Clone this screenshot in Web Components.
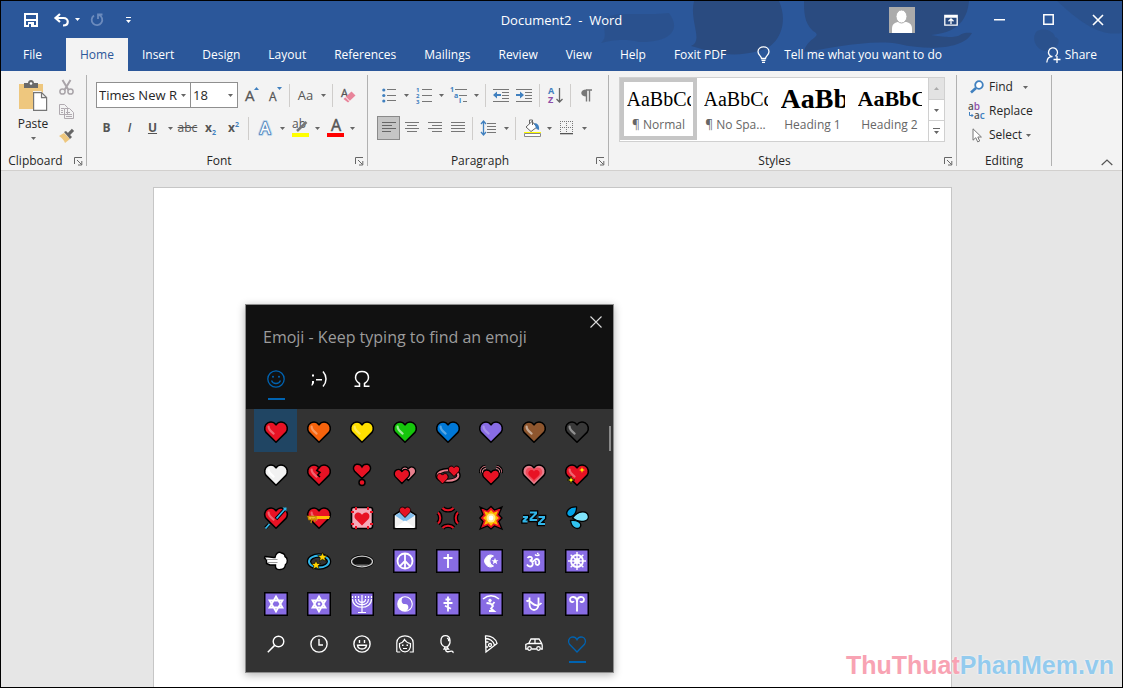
<!DOCTYPE html>
<html lang="en">
<head>
<meta charset="utf-8">
<title>Document2 - Word</title>
<style>
	body {
		margin: 0;
		font: 12px/16px "Open Sans", "Noto Sans", sans-serif;
		color: #262626;
	}
</style>
</head>
<body>
<word-window></word-window>

<script>
const heart = "M12 22.2L2 12.4C-.4 9.2 .6 4.6 3.8 2.9C6.6 1.4 10 2.2 12 4.8C14 2.2 17.4 1.4 20.2 2.9C23.4 4.6 24.4 9.2 22 12.4Z";
const smallHeart = "M6 11.5L1 6.4C-.2 4.6 .3 2.2 2 1.4C3.5 .7 5.1 1.2 6 2.6C6.9 1.2 8.5 .7 10 1.4C11.7 2.2 12.2 4.6 11 6.4Z";
const spark = "M0-4L1-1L4 0L1 1L0 4L-1 1L-4 0L-1-1Z";

const heartOf = (color, shine = .35) => `
	<path d="${heart}" fill="${color}" stroke="#000" stroke-width="1.6" stroke-linejoin="round"/>
	<path d="M4.6 6.5C4.3 9.4 7 11.6 9.6 13.6" fill="none" stroke="#fff" stroke-opacity="${shine}" stroke-width="2.2" stroke-linecap="round"/>`;

const tile = (art) => `
	<rect x="0" y="0" width="24" height="24" fill="#000"/>
	<rect x="1.5" y="1.5" width="21" height="21" fill="#886ce4"/>
	<g fill="none" stroke="#fff" stroke-width="1.8">${art}</g>`;

const outlined = (d, color, inner, outer) => `
	<path d="${d}" fill="none" stroke="#000" stroke-width="${outer}"/>
	<path d="${d}" fill="none" stroke="${color}" stroke-width="${inner}"/>`;

const spokes = (count, from, to) => Array.from({ length: count }, (_, i) =>
	`<path d="M12 ${12 - from}V${12 - to}" transform="rotate(${i * 360 / count} 12 12)"/>`).join("");

const lines = (rows) => rows.map(([x, y, w]) => `<path d="M${x} ${y}.5h${w}"/>`).join("");

// name: [width, height, svg content]
const ICONS = {
	save: [14, 14, `<path d="M1 1h12v12H1z" fill="none" stroke="#fff" stroke-width="2"/><path d="M2 6h10v2H2zM4 9h6v4H4z" fill="#fff"/><path d="M5 11h2v3H5z" fill="#2b579a"/>`],
	undo: [15, 14, `<path d="M6 1L1.5 5L6 9M2 5h7.5C15 5 15.500 12.500 9 12.500" fill="none" stroke="#fff" stroke-width="2.2"/>`],
	redo: [14, 14, `<path d="M9 2A5.300 5.300 0 1 1 4 2.500M8 6V1.500H12.500" fill="none" stroke="#6c8bbd" stroke-width="1.8"/>`],
	customize: [5, 6, `<path d="M0 0h5v1H0zM0 3h5L2.500 6z" fill="#fff"/>`],
	caret: [5, 3, `<path d="M0 0h5L2.500 3z" fill="currentColor"/>`],
	caretUp: [5, 3, `<path d="M0 3h5L2.500 0z" fill="currentColor"/>`],
	more: [7, 6, `<path d="M0 0h7v1H0zM1 3h5L3.500 6z" fill="#666"/>`],
	avatar: [26, 26, `<path d="M0 0h26v26H0z" fill="#ababab"/><path d="M3 26v-4c0-5 3-7 7-7h6c4 0 7 2 7 7v4z" fill="#fff"/><ellipse cx="12.500" cy="9.500" rx="5.500" ry="6.500" fill="#fff" stroke="#ababab"/>`],
	ribbonDisplay: [14, 12, `<path d="M.8 1.500h12.400v9.700H.8zM1 3h12M7 10V5M4.500 7.200L7 4.800L9.500 7.200" fill="none" stroke="#fff" stroke-width="1.300"/>`],
	minimize: [11, 11, `<path d="M0 5h11v1.500H0z" fill="#fff"/>`],
	maximize: [11, 11, `<path d="M.8.8h9.400v9.400H.8z" fill="none" stroke="#fff" stroke-width="1.5"/>`],
	close: [12, 12, `<path d="M1 1l10 10M11 1L1 11" stroke="#fff" stroke-width="1.6"/>`],
	thinClose: [12, 12, `<path d="M.5.5l11 11M11.500.5l-11 11" stroke="#ddd" stroke-width="1.1"/>`],
	bulb: [13, 17, `<path d="M4.500 12.500C4.500 10 1 9 1 5.700C1 2.700 3.500 .8 6.500 .8S12 2.700 12 5.700C12 9 8.500 10 8.500 12.500zM4.500 14.300h4M5 16.300h3" fill="none" stroke="#fff" stroke-width="1.3"/>`],
	share: [15, 16, `<path d="M.8 15.500C1 11.500 3 9.500 6.500 9.500M6.500 9.800A4.500 4.500 0 1 1 9.300 9.200M11 9v7M7.500 12.500h7" fill="none" stroke="#fff" stroke-width="1.3"/>`],
	paste: [28, 31, `<path d="M0 4h24v25H0z" fill="#eec77e"/><path d="M5 3h4c0-4 6-4 6 0h4v5H5z" fill="#6a6a6a"/><circle cx="12" cy="3.500" r="1.300" fill="#fff"/><path d="M14 11h8l6 6v14H14z" fill="#f3f3f3"/><path d="M14.600 12.600h8l5 5v12.800h-13zM22.500 12.600v5h5" fill="#fff" stroke="#767676" stroke-width="1.2"/>`],
	cut: [15, 15, `<g fill="none" stroke="#a9a4a9" stroke-width="1.5"><path d="M3.500 0L9.500 10M11.500 0L5.500 10" stroke-width="2"/><circle cx="3.500" cy="11.500" r="2.600"/><circle cx="11.500" cy="11.500" r="2.600"/></g>`],
	copy: [15, 15, `<g fill="#f3f3f3" stroke="#b0aab0"><path d="M.5.5h5l3 3v7h-8zM5.500 4.500h5l4 4v6h-9z"/><path d="M2 4.500h3M2 6.500h2M2 8.500h2M7 8.500h4M7 10.500h6M7 12.500h6"/></g>`],
	brush: [16, 15, `<path d="M0 8L5 5L11 11L6 15C5 12 3 10 0 8z" fill="#eec77e"/><path d="M5 4L7 3L13 9L11 11z" fill="#666"/><path d="M9.500 6.500L14 1.800" stroke="#666" stroke-width="3.200"/>`],
	launcher: [9, 9, `<path d="M.5 7V.5H8M3 3l4.500 4.500M7.800 4v4H4" fill="none" stroke="#666"/>`],
	grow: [16, 18, `<text x="1" y="15" font-size="15" fill="#555" stroke="#555" stroke-width=".3">A</text><path d="M10 4h5L12.500 1z" fill="#4080bf"/>`],
	shrink: [16, 18, `<text x="2" y="15" font-size="12" fill="#555" stroke="#555" stroke-width=".3">A</text><path d="M10 1h5L12.500 4z" fill="#4080bf"/>`],
	eraser: [16, 17, `<text x="0" y="10" font-size="11" fill="#555" stroke="#555" stroke-width=".3">A</text><path d="M2.500 12L10.500 4.500L14.500 8.500L7 15.500z" fill="#e8849a"/><path d="M4.500 10l4.500 4.500" stroke="#fff"/>`],
	effects: [16, 18, `<g font-size="16" stroke-linejoin="round"><text x="3" y="15" fill="#bcd6ee" stroke="#bcd6ee" stroke-width="4">A</text><text x="3" y="15" fill="#fff" stroke="#3a75b0" stroke-width="2">A</text><text x="3" y="15" fill="#fff" stroke="#fff" stroke-width=".3">A</text></g>`],
	highlight: [18, 18, `<text x="1" y="9" font-size="12" fill="#555">ab</text><path d="M6 12L15.500 3" stroke="#777" stroke-width="2.500"/><path d="M1 14h17v4H1z" fill="#ff0"/>`],
	fontColor: [18, 18, `<text x="5" y="12" font-size="16" fill="#555" stroke="#555" stroke-width=".5">A</text><path d="M1 14h17v4H1z" fill="#f00"/>`],
	bullets: [14, 15, `<g fill="#4080bf"><circle cx="1.800" cy="2" r="1.600"/><circle cx="1.800" cy="7.500" r="1.600"/><circle cx="1.800" cy="13" r="1.600"/></g><g stroke="#777">${lines([[5, 1, 9], [5, 7, 9], [5, 12, 9]])}</g>`],
	numbering: [16, 17, `<g font-size="6" font-weight="700" fill="#4080bf"><text y="5">1</text><text y="11">2</text><text y="17">3</text></g><g stroke="#777">${lines([[6, 2, 10], [6, 8, 10], [6, 14, 10]])}</g>`],
	multilevel: [17, 17, `<g font-size="7" font-weight="700" fill="#4080bf"><text y="5">1</text><text x="4" y="11">a</text><text x="9" y="16">i</text></g><g stroke="#777">${lines([[5, 2, 12], [9, 8, 8], [13, 14, 4]])}</g>`],
	outdent: [17, 14, `<g stroke="#777">${lines([[0, 1, 16], [9, 4, 7], [9, 7, 7], [9, 10, 7], [0, 13, 16]])}</g><path d="M0 7l4-3.500v2.500h4v2H4v2.500z" fill="#4080bf"/>`],
	indent: [17, 14, `<g stroke="#777">${lines([[0, 1, 16], [9, 4, 7], [9, 7, 7], [9, 10, 7], [0, 13, 16]])}</g><path d="M8 7l-4-3.500v2.500H0v2h4v2.500z" fill="#4080bf"/>`],
	sort: [15, 17, `<g font-size="9" font-weight="700"><text y="7" fill="#4080bf">A</text><text y="16" fill="#8e4ea8">Z</text></g><path d="M11.500 1v14M8.500 12l3 3l3-3" fill="none" stroke="#666" stroke-width="1.300"/>`],
	pilcrow: [11, 13, `<path d="M5 1h6M5.500 1v11.500M8.500 1v11.500" fill="none" stroke="#777" stroke-width="1.400"/><path d="M5.500 .5v7C-1.500 7.500-1.500 .5 5.500 .5z" fill="#777"/>`],
	alignLeft: [16, 12, `<g stroke="#666">${lines([[1, 0, 14], [1, 3, 10], [1, 6, 14], [1, 9, 9]])}</g>`],
	alignCenter: [16, 12, `<g stroke="#777">${lines([[1, 0, 14], [3, 3, 10], [1, 6, 14], [3, 9, 10]])}</g>`],
	alignRight: [16, 12, `<g stroke="#777">${lines([[1, 0, 14], [5, 3, 10], [1, 6, 14], [5, 9, 10]])}</g>`],
	justify: [16, 12, `<g stroke="#777">${lines([[1, 0, 14], [1, 3, 14], [1, 6, 14], [1, 9, 14]])}</g>`],
	spacing: [15, 16, `<path d="M2.500 2v12M0 4l2.500-3L5 4M0 12l2.500 3L5 12" fill="none" stroke="#4080bf" stroke-width="1.300"/><g stroke="#777">${lines([[6, 3, 9], [6, 6, 9], [6, 9, 9], [6, 12, 9]])}</g>`],
	shading: [18, 18, `<path d="M3 8L9 2.500L14 8L8 12.500zM6.500 5V1h3v5" fill="#fff" stroke="#666"/><path d="M11 4c4 0 5.500 3 5 7l-2.500-1z" fill="#4080bf"/><path d="M1 13h17v1H1z" fill="#ff0"/><path d="M1.500 14.500h16v3h-16z" fill="#fff" stroke="#888"/>`],
	borders: [14, 14, `<path d="M.5 0v12M12.500 0v12M6.500 0v12M0 .5h13M0 6.500h13" stroke="#777" stroke-dasharray="1 1"/><path d="M0 12h13v1.300H0z" fill="#555"/>`],
	find: [14, 14, `<circle cx="9" cy="5" r="3.800" fill="#fff" stroke="#4080bf" stroke-width="1.800"/><path d="M6 8L1 12.500" stroke="#4080bf" stroke-width="2.600"/>`],
	replace: [17, 17, `<text x="0" y="7" font-size="10" font-weight="600" fill="#555">a<tspan fill="#8e4ea8">b</tspan></text><text x="6" y="16" font-size="10" font-weight="600" fill="#555">a<tspan fill="#4080bf">c</tspan></text><path d="M1.500 9v3.500H5M3.500 11l1.500 1.500L3.500 14" fill="none" stroke="#4080bf"/>`],
	cursor: [10, 15, `<path d="M1 .8v11.400l2.800-2.500l1.900 4.200l2-.9l-1.900-4h3.600z" fill="#fff" stroke="#777"/>`],
	chevronUp: [12, 7, `<path d="M.7 6L6 1L11.300 6" fill="none" stroke="#555" stroke-width="1.200"/>`],

	// picker tabs
	smiley: [18, 18, `<circle cx="9" cy="9" r="8.200" fill="none" stroke="currentColor" stroke-width="1.300"/><circle cx="6" cy="6.800" r="1" fill="currentColor"/><circle cx="12" cy="6.800" r="1" fill="currentColor"/><path d="M4.500 10.500c1.500 4 7.500 4 9 0" fill="none" stroke="currentColor" stroke-width="1.300"/>`],
	wink: [18, 18, `<path d="M2 4.500h2v2H2zM2 11h2v2L2.500 15.500H1.300L2 13zM6 9h6v1.400H6z" fill="currentColor"/><path d="M13 1.500c4 4.500 4 10.500 0 15" fill="none" stroke="currentColor" stroke-width="1.500"/>`],
	omega: [18, 18, `<path d="M1.500 16.200h5v-2.700C0 9.500 2 1.500 9 1.500s9 8 2.500 12v2.700h5" fill="none" stroke="currentColor" stroke-width="1.500"/>`],
	search: [18, 18, `<circle cx="11.500" cy="6.500" r="5.300" fill="none" stroke="currentColor" stroke-width="1.400"/><path d="M7.600 10.400L.8 17.200" stroke="currentColor" stroke-width="1.500"/>`],
	clock: [18, 18, `<path d="M9 4v6h4" fill="none" stroke="currentColor" stroke-width="1.400"/><circle cx="9" cy="9" r="8.100" fill="none" stroke="currentColor" stroke-width="1.400"/>`],
	grin: [18, 18, `<g fill="none" stroke="currentColor" stroke-width="1.400"><circle cx="9" cy="9" r="8.100"/><path d="M4.500 10.300h9c-.5 5-8.500 5-9 0zM6.500 5v3M11.500 5v3"/></g>`],
	person: [18, 18, `<g fill="none" stroke="currentColor" stroke-width="1.200"><path d="M.8 17V8C.8 3 5 .8 9 .8S17.200 3 17.200 8v9h-3.500M.8 17h3.500"/><path d="M3.500 8.500c3-.5 4-2 5-4c1 2 3 3.500 6 4c.5 5-1.500 8.300-5.500 8.300S3 13.500 3.500 8.500zM7 13.500h4"/></g><path d="M6 9.500h1.500V11H6zM10.500 9.500H12V11h-1.500z" fill="currentColor"/>`],
	balloon: [18, 18, `<g fill="none" stroke="currentColor" stroke-width="1.300"><path d="M6 12C0 9.500 1 .7 6.500 .7S12.500 9 8 12zM6 12L5 14h4.500L8 12M7 14c-1 3 2 3 4 2.400s3.500 0 3 1.600M8 3c1.500.5 2 2 1.500 3.300"/></g>`],
	pizza: [18, 18, `<g fill="none" stroke="currentColor" stroke-width="1.300"><path d="M3.500 1C9 .5 14 3.500 15 8.500L4 17zM3.500 3.500c4 0 8 2.500 9 6.500"/><circle cx="8" cy="10" r="1.500"/><path d="M4 7h2.500M4 12h2"/></g>`],
	car: [18, 18, `<g fill="none" stroke="currentColor" stroke-width="1.300"><path d="M2.500 14H.8V9.500L4 8l2-4h8l2.500 4l.7 2v4h-1.500M6.500 14h5M3 8.500h14M10 4v5"/><circle cx="4.500" cy="13.500" r="1.800"/><circle cx="13.500" cy="13.500" r="1.800"/></g>`],
	heartLine: [18, 18, `<path d="M9 17L1.500 9.300C-.5 6.500.8 3 3.500 2.200C5.700 1.600 7.900 2.500 9 4.700C10.100 2.500 12.300 1.600 14.500 2.200C17.200 3 18.500 6.500 16.500 9.300Z" fill="none" stroke="currentColor" stroke-width="1.300"/>`],

	// emoji
	red: [24, 24, heartOf("#e81224")],
	orange: [24, 24, heartOf("#f7630c")],
	yellow: [24, 24, heartOf("#ffe000")],
	green: [24, 24, heartOf("#16c60c", .6)],
	blue: [24, 24, heartOf("#0078d7")],
	purple: [24, 24, heartOf("#886ce4", .25)],
	brown: [24, 24, heartOf("#8e562e", .5)],
	black: [24, 24, heartOf("#383838", .45)],
	white: [24, 24, heartOf("#f2f2f2", 1)],
	broken: [24, 24, `${heartOf("#e81224")}<path d="M12 4.500L9.800 7.500L13 9.500L10.800 12L13 14" fill="none" stroke="#000" stroke-width="1.600"/>`],
	exclamation: [24, 24, `<g fill="#e81224" stroke="#000" stroke-width="1.500"><path d="M12 15.500L4.500 8.300C2.300 5.500 3.600 2 6.500 1.300C9 .8 11 1.900 12 3.800C13 1.900 15 .8 17.500 1.300C20.400 2 21.700 5.500 19.500 8.300Z"/><circle cx="12" cy="19.500" r="3"/></g>`],
	twoHearts: [24, 24, `<g stroke="#000" stroke-linejoin="round"><path d="${smallHeart}" transform="translate(7.500 2.500) scale(1.300)" fill="#e8808e"/><path d="${smallHeart}" transform="translate(.8 5) scale(1.350)" fill="#e81224"/></g>`],
	revolving: [24, 24, `<ellipse cx="12" cy="12.500" rx="10.500" ry="5.500" fill="none" stroke="#000" stroke-width="4.500"/><ellipse cx="12" cy="12.500" rx="10.300" ry="5.300" fill="none" stroke="#e8808e" stroke-width="2"/><g fill="#e81224" stroke="#000" stroke-linejoin="round"><path d="${smallHeart}" transform="translate(12 2)"/><path d="${smallHeart}" transform="translate(.5 9.500)"/></g>`],
	beating: [24, 24, `<path d="M12 21.500L4.500 14C2.500 11 4 7.500 7 7C9.500 6.700 11 7.700 12 9.300C13 7.700 14.500 6.700 17 7C20 7.500 21.500 11 19.500 14Z" fill="#e81224" stroke="#000" stroke-width="1.400"/><g fill="none"><path d="M1.500 10C.7 6.500 3 3.300 6.500 3.200M22.500 10C23.300 6.500 21 3.300 17.500 3.200" stroke="#000" stroke-width="3"/><path d="M1.500 9.500C1 6.500 3 3.500 6.500 3.300M3.500 9.500C3 7.300 4.800 5.700 7 5.500M22.500 9.500C23 6.500 21 3.500 17.500 3.300M20.500 9.500C21 7.300 19.200 5.700 17 5.500" stroke="#e8808e"/></g>`],
	growing: [24, 24, `<path d="${heart}" fill="#e8808e" stroke="#000" stroke-width="1.600"/><path d="${heart}" transform="translate(3.200 3) scale(.73)" fill="#f04a5a"/><path d="${heart}" transform="translate(6 6) scale(.5)" fill="#e81224"/>`],
	sparkling: [24, 24, `${heartOf("#e81224")}<g fill="#fff100"><path d="${spark}" transform="translate(17 7) scale(.75)"/><path d="${spark}" transform="translate(6 17)" stroke="#000" stroke-width=".6"/></g>`],
	arrow: [24, 24, `${heartOf("#e81224")}<path d="M1.500 22L5 18.500M12 13L21.500 2.500" stroke="#000" stroke-width="3.400"/><path d="M1.500 22.500L5.500 18M12.500 12.500L21 3" stroke="#31b5e8" stroke-width="1.800"/><path d="M18.500 1.500h4v4z" fill="#31b5e8"/>`],
	ribbon: [24, 24, `${heartOf("#e81224")}<path d="M1 10h22l-1 3H1z" fill="#ffb900"/><path d="M1 10.500h8v3H2zM5 12l-1 5M7 12l1 4" stroke="#c98a00" fill="#ffc83d" stroke-width="1.400"/>`],
	decoration: [24, 24, `<rect x="1.500" y="1.500" width="21" height="21" rx="2" fill="#f4abba" stroke="#000" stroke-width="1.600"/><path d="M12 19.500L5.500 13C3.500 10.500 4.800 7 7.600 6.500C9.600 6.200 11 7.300 12 8.800C13 7.300 14.400 6.200 16.400 6.500C19.200 7 20.500 10.500 18.500 13Z" fill="#e81224"/><g fill="#e81224"><path d="M1 5h3v2H1zM5 1h2v3H5zM17 1h2v3h-2zM20 5h3v2h-3zM1 17h3v2H1zM5 20h2v3H5zM17 20h2v3h-2zM20 17h3v2h-3z"/></g>`],
	letter: [24, 24, `<path d="M1 9L12 2L23 9V22.500H1z" fill="#f2f2f2" stroke="#000" stroke-width="1.500"/><path d="M2 9.500L12 3L22 9.500L12 16z" fill="#83beec"/><path d="M2 22L12 14.500L22 22z" fill="#fff"/><path d="${smallHeart}" transform="translate(6 0)" fill="#e81224" stroke="#000" stroke-width=".8"/>`],
	anger: [24, 24, outlined("M6.500 2C9 5 15 5 17.500 2M6.500 22C9 19 15 19 17.500 22M2 6.500C5 9 5 15 2 17.500M22 6.500C19 9 19 15 22 17.500", "#e81224", 2, 4.600)],
	collision: [24, 24, `<path d="M1 1l7 3l4-3.500L15.500 4L23 1l-3.200 7.500L23 12l-3.200 3.500L23 23l-7.500-3L12 23l-3.500-3L1 23l3-7.500L.8 12L4 8.500z" fill="#e81224" stroke="#000" stroke-width="1.300"/><path d="M5 5l4.500 1.800L12 4l2.500 2.800L19 5l-1.800 4.500L20 12l-2.800 2.500L19 19l-4.500-1.800L12 20l-2.500-2.800L5 19l1.800-4.500L4 12l2.800-2.500z" fill="#ffb900"/><circle cx="12" cy="12" r="4.500" fill="#ffe88a"/><circle cx="12" cy="12" r="2.400" fill="#fff"/>`],
	zzz: [24, 24, outlined("M1 11h4v.5L1.500 15v.5h4M8 6.500h6v1L8.500 13v1h6.500M16.500 11h5.500v1l-5 5v1h6", "#31b5e8", 2, 4.600)],
	sweat: [24, 24, `<g stroke="#000" stroke-width="1.300"><path d="M11.500 1C4 .5 0 6 2.500 9.500S12 9 11.500 1z" fill="#00a3e8"/><path d="M7.500 12C13 4.500 22 4 23.300 10S14 17.500 7.500 12z" fill="#7ee4fb"/><path d="M5.500 14.500C12 13.500 17 17 15.500 20.500S6.500 23 5.500 14.500z" fill="#31c3f0"/></g>`],
	dash: [24, 24, `<path d="M1 7.500C4 8 8 8.200 11 8.500C11.500 4 15 2 17.500 4C20 4.500 21 6 21 7.500C24 9 24 14 21.500 15.500C21 19 19 20.500 16.500 20.500C13 21 11 19.500 11.500 16H6L2.500 14.500V11L.5 9z" fill="#fff" stroke="#000" stroke-width="1.400"/><path d="M2.500 10.500h11M3 13.500h10.500" stroke="#999"/>`],
	dizzy: [24, 24, `<ellipse cx="12" cy="12.500" rx="10" ry="6" fill="none" stroke="#000" stroke-width="4.500"/><ellipse cx="12" cy="12.500" rx="10" ry="6" fill="none" stroke="#31b5e8" stroke-width="2"/><path d="M15.500 3.500l1.300 3h3.500l-2.600 2.300l.8 3.500l-3-2l-3 2l.8-3.500L10.700 6.500h3.500zM9 11.500l1.300 3h3.500l-2.600 2.300l.8 3.500l-3-2l-3 2l.8-3.500l-2.600-2.300h3.500z" fill="#ffd400" stroke="#000" stroke-width=".6"/>`],
	hole: [24, 24, `<ellipse cx="12" cy="12.500" rx="11.800" ry="6.800" fill="#000"/><ellipse cx="12" cy="12.500" rx="10.500" ry="5.300" fill="#111" stroke="#ccc" stroke-width="1.300"/><path d="M5 15.500c4 2.200 10 2.200 14 0z" fill="#777"/>`],
	peace: [24, 24, tile(`<circle cx="12" cy="12" r="7.500"/><path d="M12 4.500v15M12 12l-5.300 5.300M12 12l5.300 5.300"/>`)],
	cross: [24, 24, tile(`<path d="M12 5v14M7.500 9h9"/>`)],
	crescent: [24, 24, tile(`<path d="M14.500 7A5.800 5.800 0 1 0 14.500 17A5.200 5.200 0 0 1 14.500 7z" fill="#fff" stroke-width="1"/><path d="M16 8.800l1 2.400h2.500l-2 1.500l.8 2.500l-2.300-1.400l-2.200 1.400l.7-2.500l-2-1.500h2.500z" fill="#fff" stroke="none"/>`)],
	om: [24, 24, tile(`<path d="M5.500 9c1.500-2 5-1.500 4.500 1c-.3 1.500-2.500 1.500-2.500 1.500c4 0 4.500 6 .5 6c-1.500 0-2.500-1-3-2M10.500 12.500c2 0 2-2.500 4-2.500c3.500 0 3.500 6 1 6s-2-3-1.500-4"/><path d="M13 5.500c1 1.500 3.500 1.500 4.500 0M15 4.500h1.500" stroke-width="1.400"/>`)],
	dharma: [24, 24, tile(`<circle cx="12" cy="12" r="6"/><circle cx="12" cy="12" r="2" fill="#fff"/><g stroke-width="1.400">${spokes(8, 2, 9)}</g>`)],
	david: [24, 24, tile(`<path d="M12 4.500l6.500 11h-13zM12 19.500l-6.500-11h13z"/>`)],
	davidDot: [24, 24, tile(`<path d="M12 4.500l6.500 11h-13zM12 19.500l-6.500-11h13z"/><circle cx="12" cy="12" r="1" fill="#fff" stroke-width="1"/>`)],
	menorah: [24, 24, tile(`<path d="M12 5v15M8 20.500h8M2.500 7c0 11 19 11 19 0M5.500 7c0 7.500 13 7.500 13 0M8.500 7c0 4.500 7 4.500 7 0" stroke-width="1.200"/><path d="M2.500 4v2M5.500 4v2M8.500 4v2M12 3v2M15.500 4v2M18.500 4v2M21.500 4v2" stroke-width="1.200"/>`)],
	yinYang: [24, 24, tile(`<circle cx="12" cy="12" r="7.800" fill="#fff" stroke="none"/><path d="M12 5.300A6.700 6.700 0 0 1 12 18.700A3.350 3.350 0 0 0 12 12A3.350 3.350 0 0 1 12 5.300z" fill="#886ce4" stroke="none"/><circle cx="12" cy="8.700" r="1.200" fill="#886ce4" stroke="none"/><circle cx="12" cy="15.300" r="1.200" fill="#fff" stroke="none"/>`)],
	orthodox: [24, 24, tile(`<path d="M12 4.500v15M9.500 7.500h5M7.500 11h9M9 13.800l6 3"/>`)],
	worship: [24, 24, tile(`<path d="M4 7c5-4 11-4 16 0" stroke-width="1.600"/><circle cx="11" cy="8.500" r="1.300" fill="#fff" stroke-width="1"/><path d="M11 11l3 3l-2 2.500l3 2.500h-5M7.500 11l3.500.5M15.500 10l-2 2.500"/>`)],
	ophiuchus: [24, 24, tile(`<path d="M7.500 5.500V12C7.500 20 16.500 20 16.500 12V5.500M4.500 9.500c2-2 4 0 6 2s6 3 9-.5"/>`)],
	aries: [24, 24, tile(`<path d="M12 19.500V10C12 3.500 5 4 5 7.500C5 10 8 11 8.700 9M12 10c0-6.500 7-6 7-2.500C19 10 16 11 15.300 9"/>`)],
};

class UiIcon extends HTMLElement {
	constructor() {
		super();
		const [w, h, art] = ICONS[this.getAttribute("name")];
		this.attachShadow({ mode: "open" });
		this.shadowRoot.innerHTML = `
			<style>
				:host { display: block; flex: none; }
				svg { display: block; overflow: visible; }
			</style>
			<svg width="${w}" height="${h}" viewBox="0 0 ${w} ${h}" aria-hidden="true">${art}</svg>`;
	}
}
customElements.define("ui-icon", UiIcon);

const RESET = `
	button, select { font: inherit; color: inherit; background: none; border: 0; padding: 0; margin: 0; }
	button { display: flex; align-items: center; justify-content: center; cursor: default; }
`;

class ToolButton extends HTMLElement {
	constructor() {
		super();
		const icon = this.getAttribute("icon");
		const label = this.getAttribute("label");
		this.attachShadow({ mode: "open" });
		this.shadowRoot.innerHTML = `
			<style>
				${RESET}
				:host { display: flex; height: 24px; color: #444; }
				button { width: 23px; box-sizing: border-box; }
				.drop { width: 12px; color: #666; }
				:host([pressed]) button { background: #c5c5c5; border: 1px solid #8a8a8a; }
			</style>
			<button type="button" aria-label="${label}">${icon ? `<ui-icon name="${icon}"></ui-icon>` : "<slot></slot>"}</button>
			${this.hasAttribute("drop") ? `<button type="button" class="drop" aria-label="${label} options"><ui-icon name="caret"></ui-icon></button>` : ""}`;
	}
}
customElements.define("tool-button", ToolButton);

class ToolSeparator extends HTMLElement {
	constructor() {
		super();
		this.attachShadow({ mode: "open" });
		this.shadowRoot.innerHTML = `
			<style>
				:host { display: block; width: 1px; height: 23px; margin: 0 4px 0 3px; background: #cfcdcb; }
			</style>`;
	}
}
customElements.define("tool-separator", ToolSeparator);

class ComboBox extends HTMLElement {
	constructor() {
		super();
		this.attachShadow({ mode: "open" });
		this.shadowRoot.innerHTML = `
			<style>
				${RESET}
				:host { display: block; }
				label { display: grid; grid-template-columns: 1fr 13px; align-items: center; box-sizing: border-box; height: 26px; background: #fff; border: 1px solid #8f8f8f; color: #666; }
				select { grid-area: 1 / 1 / 2 / 3; appearance: none; min-width: 0; width: 100%; height: 24px; padding-left: 2px; font-size: 13px; color: #262626; }
				ui-icon { grid-area: 1 / 2; justify-self: center; pointer-events: none; }
			</style>
			<label><select aria-label="${this.getAttribute("label")}"><option>${this.getAttribute("value")}</option></select><ui-icon name="caret"></ui-icon></label>`;
	}
}
customElements.define("combo-box", ComboBox);

class RibbonGroup extends HTMLElement {
	constructor() {
		super();
		const label = this.getAttribute("label");
		this.attachShadow({ mode: "open" });
		this.shadowRoot.innerHTML = `
			<style>
				${RESET}
				:host {
					display: flex;
					flex-direction: column;
					box-sizing: border-box;
					padding: 4px 1px 0 0;
					background: linear-gradient(#b1b1b1, #b1b1b1) right center / 1px calc(100% - 8px) no-repeat;
				}
				.content { flex: 1; display: flex; }
				footer { display: flex; align-items: center; height: 18px; }
				h2 { flex: 1; margin: 0; font-size: 12px; line-height: 16px; font-weight: 400; text-align: center; }
				button { width: 16px; height: 16px; }
			</style>
			<div class="content"><slot></slot></div>
			<footer>
				<h2>${label}</h2>
				${this.hasAttribute("launcher") ? `<button type="button" aria-label="${label} settings"><ui-icon name="launcher"></ui-icon></button>` : ""}
			</footer>`;
	}
}
customElements.define("ribbon-group", RibbonGroup);

class StyleCard extends HTMLElement {
	constructor() {
		super();
		this.attachShadow({ mode: "open" });
		this.shadowRoot.innerHTML = `
			<style>
				${RESET}
				:host { display: block; width: 77px; }
				button { flex-direction: column; box-sizing: border-box; width: 100%; height: 62px; border: 4px solid transparent; }
				:host([selected]) button { border-color: #c6c6c6; }
				.sample { width: 64px; height: 32px; overflow: hidden; text-align: left; white-space: nowrap; color: #000; font: 20px/34px "Liberation Serif", serif; }
				:host([level="1"]) .sample { font-size: 28px; font-weight: 700; }
				:host([level="2"]) .sample { font-size: 22px; font-weight: 700; }
				.name { line-height: 22px; color: #666; white-space: nowrap; }
			</style>
			<button type="button">
				<span class="sample">${this.getAttribute("sample")}</span>
				<span class="name"><slot></slot></span>
			</button>`;
	}
}
customElements.define("style-card", StyleCard);

class StyleGallery extends HTMLElement {
	constructor() {
		super();
		this.attachShadow({ mode: "open" });
		this.shadowRoot.innerHTML = `
			<style>
				${RESET}
				:host { display: flex; height: 63px; border: 1px solid #d0d0d0; background: #fff; }
				.scroll { display: grid; grid-template-rows: repeat(3, 1fr); width: 15px; border-left: 1px solid #d0d0d0; color: #666; }
				.scroll button + button { border-top: 1px solid #d0d0d0; }
				.scroll button:first-child { background: #e3e3e3; color: #aaa; }
			</style>
			<slot></slot>
			<div class="scroll">
				<button type="button" aria-label="Previous styles"><ui-icon name="caretUp"></ui-icon></button>
				<button type="button" aria-label="Next styles"><ui-icon name="caret"></ui-icon></button>
				<button type="button" aria-label="More styles"><ui-icon name="more"></ui-icon></button>
			</div>`;
	}
}
customElements.define("style-gallery", StyleGallery);

class EditCommand extends HTMLElement {
	constructor() {
		super();
		this.attachShadow({ mode: "open" });
		this.shadowRoot.innerHTML = `
			<style>
				${RESET}
				:host { display: block; }
				button { height: 24px; gap: 4px; }
				.icon { display: flex; justify-content: center; width: 17px; }
				.caret { color: #666; margin-left: var(--caret-gap, 0); }
			</style>
			<button type="button">
				<span class="icon"><ui-icon name="${this.getAttribute("icon")}"></ui-icon></span>
				<slot></slot>
				${this.hasAttribute("drop") ? '<ui-icon class="caret" name="caret"></ui-icon>' : ""}
			</button>`;
	}
}
customElements.define("edit-command", EditCommand);

class TitleBar extends HTMLElement {
	constructor() {
		super();
		this.attachShadow({ mode: "open" });
		this.shadowRoot.innerHTML = `
			<style>
				${RESET}
				:host { display: grid; grid-template-columns: 1fr auto 1fr; align-items: center; height: 37px; color: #fff; }
				.quick, .controls { display: flex; align-items: center; height: 34px; }
				.quick { padding-left: 19px; }
				.quick button { width: 22px; height: 26px; }
				.quick .undo { margin-left: 8px; }
				.quick .small { width: 10px; }
				.quick .redo { margin: 0 15px 0 4px; }
				h1 { margin: 0; font-size: 13px; line-height: 16px; font-weight: 400; white-space: pre; }
				.controls { justify-content: flex-end; }
				.controls button { width: 49px; height: 30px; }
				.controls .avatar { width: 26px; margin-right: 11px; }
			</style>
			<div class="quick">
				<button type="button" aria-label="Save"><ui-icon name="save"></ui-icon></button>
				<button type="button" class="undo" aria-label="Undo"><ui-icon name="undo"></ui-icon></button>
				<button type="button" class="small" aria-label="Undo history"><ui-icon name="caret"></ui-icon></button>
				<button type="button" class="redo" aria-label="Redo"><ui-icon name="redo"></ui-icon></button>
				<button type="button" class="small" aria-label="Customize toolbar"><ui-icon name="customize"></ui-icon></button>
			</div>
			<h1><slot></slot></h1>
			<div class="controls">
				<button type="button" class="avatar" aria-label="Account"><ui-icon name="avatar"></ui-icon></button>
				<button type="button" aria-label="Ribbon display options"><ui-icon name="ribbonDisplay"></ui-icon></button>
				<button type="button" aria-label="Minimize"><ui-icon name="minimize"></ui-icon></button>
				<button type="button" aria-label="Maximize"><ui-icon name="maximize"></ui-icon></button>
				<button type="button" aria-label="Close"><ui-icon name="close"></ui-icon></button>
			</div>`;
	}
}
customElements.define("title-bar", TitleBar);

class RibbonTabs extends HTMLElement {
	constructor() {
		super();
		const tabs = ["File", "Home", "Insert", "Design", "Layout", "References", "Mailings", "Review", "View", "Help", "Foxit PDF"];
		this.attachShadow({ mode: "open" });
		this.shadowRoot.innerHTML = `
			<style>
				${RESET}
				:host { display: flex; height: 33px; padding: 0 25px 0 8px; color: #fff; }
				[role="tablist"] { display: flex; }
				[role="tab"] { padding: 0 14px; white-space: nowrap; }
				[role="tab"]:first-child { margin-right: 10px; }
				[aria-selected="true"] { background: #f3f3f3; color: #2b579a; }
				.tell { gap: 14px; margin-left: 17px; white-space: nowrap; }
				.share { gap: 4px; margin-left: auto; }
			</style>
			<div role="tablist">
				${tabs.map((tab) => `<button type="button" role="tab" aria-selected="${tab === "Home"}">${tab}</button>`).join("")}
			</div>
			<button type="button" class="tell"><ui-icon name="bulb"></ui-icon>Tell me what you want to do</button>
			<button type="button" class="share"><ui-icon name="share"></ui-icon>Share</button>`;
	}
}
customElements.define("ribbon-tabs", RibbonTabs);

class WordRibbon extends HTMLElement {
	constructor() {
		super();
		this.attachShadow({ mode: "open" });
		this.shadowRoot.innerHTML = `
			<style>
				${RESET}
				:host { display: flex; height: 99px; background: #f3f3f3; border-bottom: 1px solid #d2d0ce; }
				.clipboard { width: 86px; }
				.font { width: 281px; }
				.paragraph { width: 241px; }
				.styles { width: 348px; }
				.editing { width: 95px; }
				.paste { flex-direction: column; justify-content: flex-start; gap: 5px; width: 44px; height: 72px; margin-left: 10px; padding-top: 5px; color: #262626; }
				.paste ui-icon + ui-icon { color: #666; }
				.small { display: grid; grid-auto-rows: 24px; align-content: start; }
				.rows { display: grid; grid-auto-rows: 24px; gap: 9px; align-content: start; padding: 8px 0 0 8px; }
				.paragraph .rows { padding-left: 9px; }
				.rows > div { display: flex; align-items: center; }
				.combo { display: flex; margin: 0 2px 0 1px; }
				.family { width: 95px; }
				.size { width: 48px; margin-left: -1px; }
				style-gallery { margin: 2px 0 0 10px; align-self: flex-start; }
				.commands { padding-left: 11px; }
				b, i, u, s, span { font-size: 12px; color: #555; }
				span { font-size: 13px; }
				b, u { font-weight: 700; }
				i { font-weight: 600; }
				sub, sup { color: #4080bf; font-size: 7px; line-height: 0; }
				.collapse { align-self: flex-end; width: 24px; height: 16px; margin: 0 3px 0 auto; }
			</style>
			<ribbon-group class="clipboard" label="Clipboard" launcher>
				<button type="button" class="paste"><ui-icon name="paste"></ui-icon>Paste<ui-icon name="caret"></ui-icon></button>
				<div class="small">
					<tool-button icon="cut" label="Cut"></tool-button>
					<tool-button icon="copy" label="Copy"></tool-button>
					<tool-button icon="brush" label="Format painter"></tool-button>
				</div>
			</ribbon-group>
			<ribbon-group class="font" label="Font" launcher>
				<div class="rows">
					<div>
						<div class="combo">
							<combo-box class="family" label="Font family" value="Times New R"></combo-box>
							<combo-box class="size" label="Font size" value="18"></combo-box>
						</div>
						<tool-button icon="grow" label="Grow font"></tool-button>
						<tool-button icon="shrink" label="Shrink font"></tool-button>
						<tool-separator></tool-separator>
						<tool-button label="Change case" drop><span>Aa</span></tool-button>
						<tool-separator></tool-separator>
						<tool-button icon="eraser" label="Clear formatting"></tool-button>
					</div>
					<div>
						<tool-button label="Bold"><b>B</b></tool-button>
						<tool-button label="Italic"><i>I</i></tool-button>
						<tool-button label="Underline" drop><u>U</u></tool-button>
						<tool-button label="Strikethrough"><s>abc</s></tool-button>
						<tool-button label="Subscript"><b>x<sub>2</sub></b></tool-button>
						<tool-button label="Superscript"><b>x<sup>2</sup></b></tool-button>
						<tool-separator></tool-separator>
						<tool-button icon="effects" label="Text effects" drop></tool-button>
						<tool-button icon="highlight" label="Highlight" drop></tool-button>
						<tool-button icon="fontColor" label="Font color" drop></tool-button>
					</div>
				</div>
			</ribbon-group>
			<ribbon-group class="paragraph" label="Paragraph" launcher>
				<div class="rows">
					<div>
						<tool-button icon="bullets" label="Bullets" drop></tool-button>
						<tool-button icon="numbering" label="Numbering" drop></tool-button>
						<tool-button icon="multilevel" label="Multilevel list" drop></tool-button>
						<tool-separator></tool-separator>
						<tool-button icon="outdent" label="Decrease indent"></tool-button>
						<tool-button icon="indent" label="Increase indent"></tool-button>
						<tool-separator></tool-separator>
						<tool-button icon="sort" label="Sort"></tool-button>
						<tool-separator></tool-separator>
						<tool-button icon="pilcrow" label="Show marks"></tool-button>
					</div>
					<div>
						<tool-button icon="alignLeft" label="Align left" pressed></tool-button>
						<tool-button icon="alignCenter" label="Center"></tool-button>
						<tool-button icon="alignRight" label="Align right"></tool-button>
						<tool-button icon="justify" label="Justify"></tool-button>
						<tool-separator></tool-separator>
						<tool-button icon="spacing" label="Line spacing" drop></tool-button>
						<tool-separator></tool-separator>
						<tool-button icon="shading" label="Shading" drop></tool-button>
						<tool-button icon="borders" label="Borders" drop></tool-button>
					</div>
				</div>
			</ribbon-group>
			<ribbon-group class="styles" label="Styles" launcher>
				<style-gallery>
					<style-card sample="AaBbCc" selected>¶ Normal</style-card>
					<style-card sample="AaBbCc">¶ No Spa...</style-card>
					<style-card sample="AaBb" level="1">Heading 1</style-card>
					<style-card sample="AaBbC" level="2">Heading 2</style-card>
				</style-gallery>
			</ribbon-group>
			<ribbon-group class="editing" label="Editing">
				<div class="commands">
					<edit-command icon="find" drop style="--caret-gap: 6px">Find</edit-command>
					<edit-command icon="replace">Replace</edit-command>
					<edit-command icon="cursor" drop>Select</edit-command>
				</div>
			</ribbon-group>
			<button type="button" class="collapse" aria-label="Collapse the ribbon"><ui-icon name="chevronUp"></ui-icon></button>`;
	}
}
customElements.define("word-ribbon", WordRibbon);

const EMOJI = [
	"red orange yellow green blue purple brown black",
	"white broken exclamation twoHearts revolving beating growing sparkling",
	"arrow ribbon decoration letter anger collision zzz sweat",
	"dash dizzy hole peace cross crescent om dharma",
	"david davidDot menorah yinYang orthodox worship ophiuchus aries",
].join(" ").split(" ");

class PickerTabs extends HTMLElement {
	constructor() {
		super();
		const active = this.getAttribute("active");
		this.attachShadow({ mode: "open" });
		this.shadowRoot.innerHTML = `
			<style>
				${RESET}
				:host { display: flex; padding: 0 8px; color: #fff; }
				button { position: relative; width: 43px; height: var(--tab-height, 43px); }
				[aria-selected="true"] { color: #0063b1; }
				[aria-selected="true"]::after { content: ""; position: absolute; bottom: 0; left: 14px; width: 17px; height: 2px; background: #0063b1; }
			</style>
			${this.getAttribute("icons").split(" ").map((name) => `
				<button type="button" role="tab" aria-label="${name}" aria-selected="${name === active}"><ui-icon name="${name}"></ui-icon></button>`).join("")}`;
	}
}
customElements.define("picker-tabs", PickerTabs);

class EmojiPicker extends HTMLElement {
	constructor() {
		super();
		this.attachShadow({ mode: "open" });
		this.shadowRoot.innerHTML = `
			<style>
				${RESET}
				:host { display: block; box-sizing: border-box; width: 369px; border: 1px solid #8d8d8d; background: #333; box-shadow: 0 2px 8px rgba(0, 0, 0, .3); }
				header { background: #111; padding-bottom: 9px; }
				.top { display: flex; justify-content: space-between; height: 52px; }
				h2 { margin: 0; padding: 21px 0 0 17px; font-size: 16px; line-height: 22px; font-weight: 400; color: #9c9c9c; }
				.close { width: 24px; height: 24px; margin: 5px 5px 0 0; }
				.body { display: flex; justify-content: space-between; padding-left: 8px; }
				.grid { display: grid; grid-template-columns: repeat(8, 43px); grid-auto-rows: 43px; }
				.grid button { padding-top: 3px; }
				.grid button:first-child { background: #204563; }
				.thumb { width: 2px; height: 25px; margin: 17px 2px 0 0; background: #8a8a8a; }
				.categories { --tab-height: 39px; padding-bottom: 9px; }
			</style>
			<header>
				<div class="top">
					<h2>Emoji - Keep typing to find an emoji</h2>
					<button type="button" class="close" aria-label="Close"><ui-icon name="thinClose"></ui-icon></button>
				</div>
				<picker-tabs role="tablist" icons="smiley wink omega" active="smiley"></picker-tabs>
			</header>
			<div class="body">
				<div class="grid">
					${EMOJI.map((name) => `<button type="button" aria-label="${name}"><ui-icon name="${name}"></ui-icon></button>`).join("")}
				</div>
				<div class="thumb"></div>
			</div>
			<picker-tabs class="categories" role="tablist" icons="search clock grin person balloon pizza car heartLine" active="heartLine"></picker-tabs>`;
	}
}
customElements.define("emoji-picker", EmojiPicker);

class WordWindow extends HTMLElement {
	constructor() {
		super();
		this.attachShadow({ mode: "open" });
		this.shadowRoot.innerHTML = `
			<style>
				:host { display: flex; flex-direction: column; box-sizing: border-box; min-height: 100vh; border: 1px solid #000; background: #e6e6e6; }
				.head { position: relative; background: #2b579a; }
				.art { position: absolute; top: 0; right: 0; width: 543px; height: 70px; }
				title-bar, ribbon-tabs { position: relative; }
				main { position: relative; flex: 1; display: flex; justify-content: center; padding: 16px 19px 0 0; }
				.page { box-sizing: border-box; width: 799px; background: #fff; border: 1px solid #c6c6c6; border-bottom: 0; }
				emoji-picker { position: absolute; top: 133px; left: 244px; }
				.mark { position: absolute; right: 8px; bottom: 6px; margin: 0; font: 700 25px/32px "Liberation Sans Narrow", "Liberation Sans", sans-serif; color: #93cbee; text-shadow: 0 0 2px #fff; }
				.mark span { color: #f8a3b3; }
			</style>
			<div class="head">
				<svg class="art" viewBox="0 0 543 70" preserveAspectRatio="xMaxYMin slice" aria-hidden="true">
					<g fill="#2a4b80">
						<path d="M22 42C30 35 22 28 27 17C35 10 60 15 90 12C105 32 85 42 60 41C45 37 30 40 22 42z" opacity=".45"/>
						<path d="M115 0H200C210 22 200 46 180 50C150 58 130 50 112 45C125 40 110 20 115 0z"/>
						<path d="M225 0H390C388 22 375 32 352 34C390 40 375 30 393 32C385 48 350 50 320 43C290 38 250 48 225 51C228 36 245 36 234 30C225 22 225 10 225 0z"/>
						<path d="M458 30C465 26 475 30 476 36C484 38 478 50 466 50C456 48 452 36 458 30zM478 0H543V32C520 36 500 20 478 0z" opacity=".5"/>
					</g>
				</svg>
				<title-bar>Document2  -  Word</title-bar>
				<ribbon-tabs></ribbon-tabs>
			</div>
			<word-ribbon></word-ribbon>
			<main>
				<div class="page"></div>
				<emoji-picker></emoji-picker>
				<p class="mark"><span>ThuThuat</span>PhanMem.vn</p>
			</main>`;
	}
}
customElements.define("word-window", WordWindow);
</script>
</body>
</html>
